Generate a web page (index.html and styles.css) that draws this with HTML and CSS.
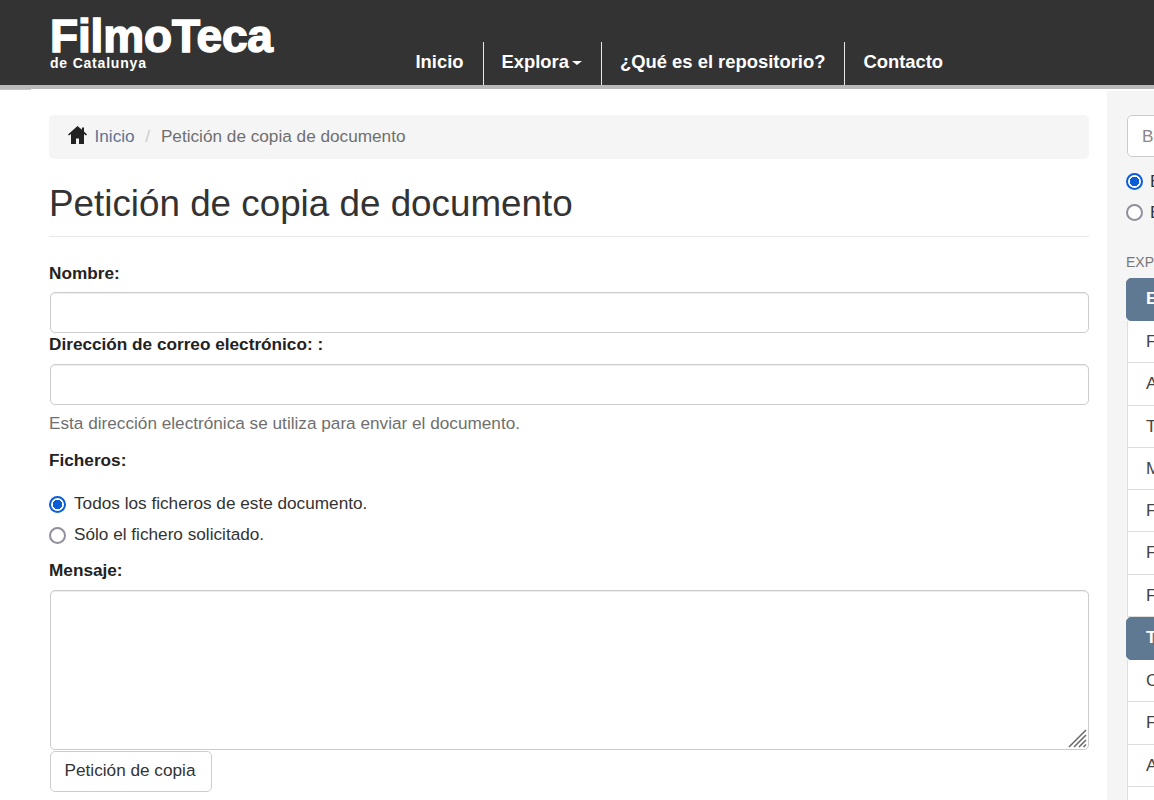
FILE: index.html
```html
<!DOCTYPE html>
<html lang="es">
<head>
<meta charset="utf-8">
<title>Petición de copia de documento</title>
<link rel="stylesheet" href="styles.css">
</head>
<body>
<header class="topbar">
  <a class="logo" href="#">
    <span class="logo-main">FilmoTeca</span>
    <span class="logo-sub">de Catalunya</span>
  </a>
  <nav class="nav">
    <a class="nav-item" href="#">Inicio</a>
    <a class="nav-item" href="#">Explora<span class="caret"></span></a>
    <a class="nav-item" href="#">¿Qué es el repositorio?</a>
    <a class="nav-item" href="#">Contacto</a>
  </nav>
</header>
<div class="page">
  <main class="content">
    <ol class="breadcrumb">
      <li class="crumb">
        <svg class="home" viewBox="0 0 19 18" aria-hidden="true"><path d="M9.500 0 0 8.500l1 1.100L3 8v10h5v-5.500h3V18h5V8l2 1.600 1-1.100-3-2.900V1.500h-2v2.200z"/></svg>
        <a class="crumb-link" href="#">Inicio</a>
      </li>
      <li class="crumb-sep">/</li>
      <li class="crumb-current">Petición de copia de documento</li>
    </ol>
    <h1 class="title">Petición de copia de documento</h1>
    <form class="form">
      <label class="label label-first" for="nombre">Nombre:</label>
      <input class="field" id="nombre" type="text">
      <label class="label label-second" for="correo">Dirección de correo electrónico: :</label>
      <input class="field field-second" id="correo" type="text">
      <p class="help">Esta dirección electrónica se utiliza para enviar el documento.</p>
      <div class="label label-files">Ficheros:</div>
      <label class="radio radio-first"><input type="radio" name="ficheros" checked><span>Todos los ficheros de este documento.</span></label>
      <label class="radio"><input type="radio" name="ficheros"><span>Sólo el fichero solicitado.</span></label>
      <label class="label label-msg" for="mensaje">Mensaje:</label>
      <div class="area-wrap">
        <textarea class="field area" id="mensaje"></textarea>
        <svg class="grip" viewBox="0 0 19 19" aria-hidden="true"><path d="M1 18 18 1M6 18 18 6M11 18l7-7M15.500 18l2.500-2.500"/></svg>
      </div>
      <button class="btn" type="button">Petición de copia</button>
    </form>
  </main>
  <aside class="sidebar">
    <input class="search" type="text" placeholder="Buscar en el repositorio">
    <label class="radio side-radio side-radio-first"><input type="radio" name="ambito" checked><span>En todo el repositorio</span></label>
    <label class="radio side-radio"><input type="radio" name="ambito"><span>En esta colección</span></label>
    <div class="side-head">EXPLORAR</div>
    <ul class="list">
      <li class="list-item active">En el repositorio</li>
      <li class="list-item">Fechas</li>
      <li class="list-item">Autores</li>
      <li class="list-item">Títulos</li>
      <li class="list-item">Materias</li>
      <li class="list-item">Fondos</li>
      <li class="list-item">Formatos</li>
      <li class="list-item">Fuentes</li>
      <li class="list-item active">Tipos de documento</li>
      <li class="list-item">Colecciones</li>
      <li class="list-item">Fechas</li>
      <li class="list-item">Autores</li>
      <li class="list-item">Títulos</li>
    </ul>
  </aside>
</div>
</body>
</html>
```
FILE: styles.css
```css
* { box-sizing: border-box; }
html, body { margin: 0; height: 800px; overflow: hidden; }
body {
  width: 1154px;
  background: #fff;
  color: #333;
  font-family: "Liberation Sans", Arial, sans-serif;
  font-size: 17.2px;
  line-height: 1.42857;
}
a { text-decoration: none; }

.topbar {
  height: 89px;
  background: #333;
  border-bottom: 4px solid #b9b9b9;
  display: flex;
  position: relative;
}
.topbar::after {
  content: "";
  position: absolute;
  left: 0;
  bottom: -5px;
  width: 31px;
  height: 1px;
  background: #c4c4c4;
}
.logo {
  width: 397px;
  padding: 16px 0 0 50px;
  display: block;
  color: #fff;
}
.logo-main {
  display: block;
  height: 40px;
  font-size: 46px;
  line-height: 40px;
  font-weight: 700;
  letter-spacing: -.15px;
  -webkit-text-stroke: 1.500px #fff;
}
.logo-sub {
  display: block;
  font-size: 14px;
  line-height: 14px;
  font-weight: 700;
  letter-spacing: .8px;
}
.nav {
  display: flex;
  margin-top: 42px;
  height: 43px;
}
.nav-item {
  color: #fff;
  font-weight: 700;
  font-size: 18.4px;
  line-height: 40px;
  padding: 0 19px 0 18px;
  border-right: 1px solid #e8e8e8;
}
.nav-item:first-child { padding-left: 18.500px; }
.nav-item:last-child { border-right: 0; }
.caret {
  display: inline-block;
  margin-left: 3px;
  vertical-align: middle;
  border-top: 4px solid #fff;
  border-left: 5px solid transparent;
  border-right: 5px solid transparent;
}

.page { display: flex; height: 711px; }
.content { width: 1107px; padding: 26px 18px 0 49px; }

.breadcrumb {
  list-style: none;
  margin: 0;
  height: 44px;
  padding: 0 19px 2px;
  display: flex;
  align-items: center;
  background: #f5f5f5;
  border-radius: 5px;
}
.crumb { display: flex; align-items: center; }
.home { width: 19px; height: 18px; margin-right: 7.500px; fill: #222; margin-top: -3px; }
.crumb-link { color: #5b7593; }
.crumb-sep { color: #ccc; padding: 0 11px 0 10.500px; }
.crumb-current { color: #6f6f6f; }

.title {
  margin: 25px 0 0;
  border-bottom: 1px solid #e8e8e8;
  font-size: 36.800px;
  line-height: 40px;
  font-weight: 400;
  color: #333;
  height: 53px;
}

.form { display: block; }
.label {
  display: block;
  font-weight: 700;
  color: #222;
  line-height: 26px;
}
.label-first { margin-top: 23px; }
.label-second { margin-top: -2px; }
.label-files { margin-top: 11px; }
.label-msg { margin-top: 9px; }

.field {
  display: block;
  width: 1039px;
  margin-left: 1px;
  height: 41px;
  border: 1px solid #ccc;
  border-radius: 5px;
  background: #fff;
  box-shadow: inset 0 1px 1px rgba(0, 0, 0, .075);
  margin-top: 6px;
  font: inherit;
}
.field-second { margin-top: 7px; }
.help { margin: 5px 0 0; color: #6f6f6f; line-height: 26px; }

.radio { display: flex; align-items: center; height: 26px; margin-top: 5px; color: #333; }
.radio span { margin-top: -2px; }
.radio input {
  appearance: none;
  width: 17px;
  height: 17px;
  margin: 0 8px 0 0;
  flex: none;
  background: #fff;
  border: 2px solid #8f8f9d;
  border-radius: 50%;
}
.radio input:checked {
  border-color: #0b5ed7;
  background: radial-gradient(circle, #0b5ed7 0 4.500px, #fff 5px);
}
.radio-first { margin-top: 18px; }

.area-wrap { position: relative; margin-top: 7px; }
.area { height: 160px; margin-top: 0; resize: none; }
.grip {
  position: absolute;
  right: 2px;
  bottom: 2px;
  width: 19px;
  height: 19px;
  fill: none;
  stroke: #666;
  stroke-width: 1.500;
}
.btn {
  display: block;
  margin: 1px 0 0 1px;
  width: 162px;
  height: 41px;
  padding: 0 2px 2px 0;
  background: #fff;
  border: 1px solid #ccc;
  border-radius: 5px;
  font: inherit;
  color: #333;
}

.sidebar {
  width: 47px;
  flex: none;
  background: #f5f5f5;
  margin-top: 2px;
  padding: 24px 0 0 19px;
  overflow: hidden;
  white-space: nowrap;
}
.search {
  display: block;
  width: 300px;
  height: 42px;
  margin-left: 1px;
  padding: 0 14px;
  border: 1px solid #ccc;
  border-radius: 5px;
  background: #fff;
  font: inherit;
}
.search::placeholder { color: #888; }
.side-radio { margin-top: 5px; width: 300px; }
.side-radio span { margin-top: 0; }
.side-radio input { margin-right: 7px; }
.side-radio-first { margin-top: 11px; }
.side-head { margin-top: 27px; font-size: 14px; line-height: 20px; color: #777; }
.list { list-style: none; margin: 6px 0 0; padding: 0; width: 300px; }
.list-item {
  height: 42.300px;
  margin-left: 1px;
  padding: 0 18px;
  line-height: 40px;
  background: #fff;
  border: 1px solid #ddd;
  border-top: 0;
  color: #444;
}
.list-item.active {
  height: 43px;
  margin-left: 0;
  padding-left: 19px;
  line-height: 39px;
  background: #5f7993;
  border: 1px solid #5f7993;
  border-radius: 5px 0 0 5px;
  color: #fff;
  font-weight: 700;
}
```
